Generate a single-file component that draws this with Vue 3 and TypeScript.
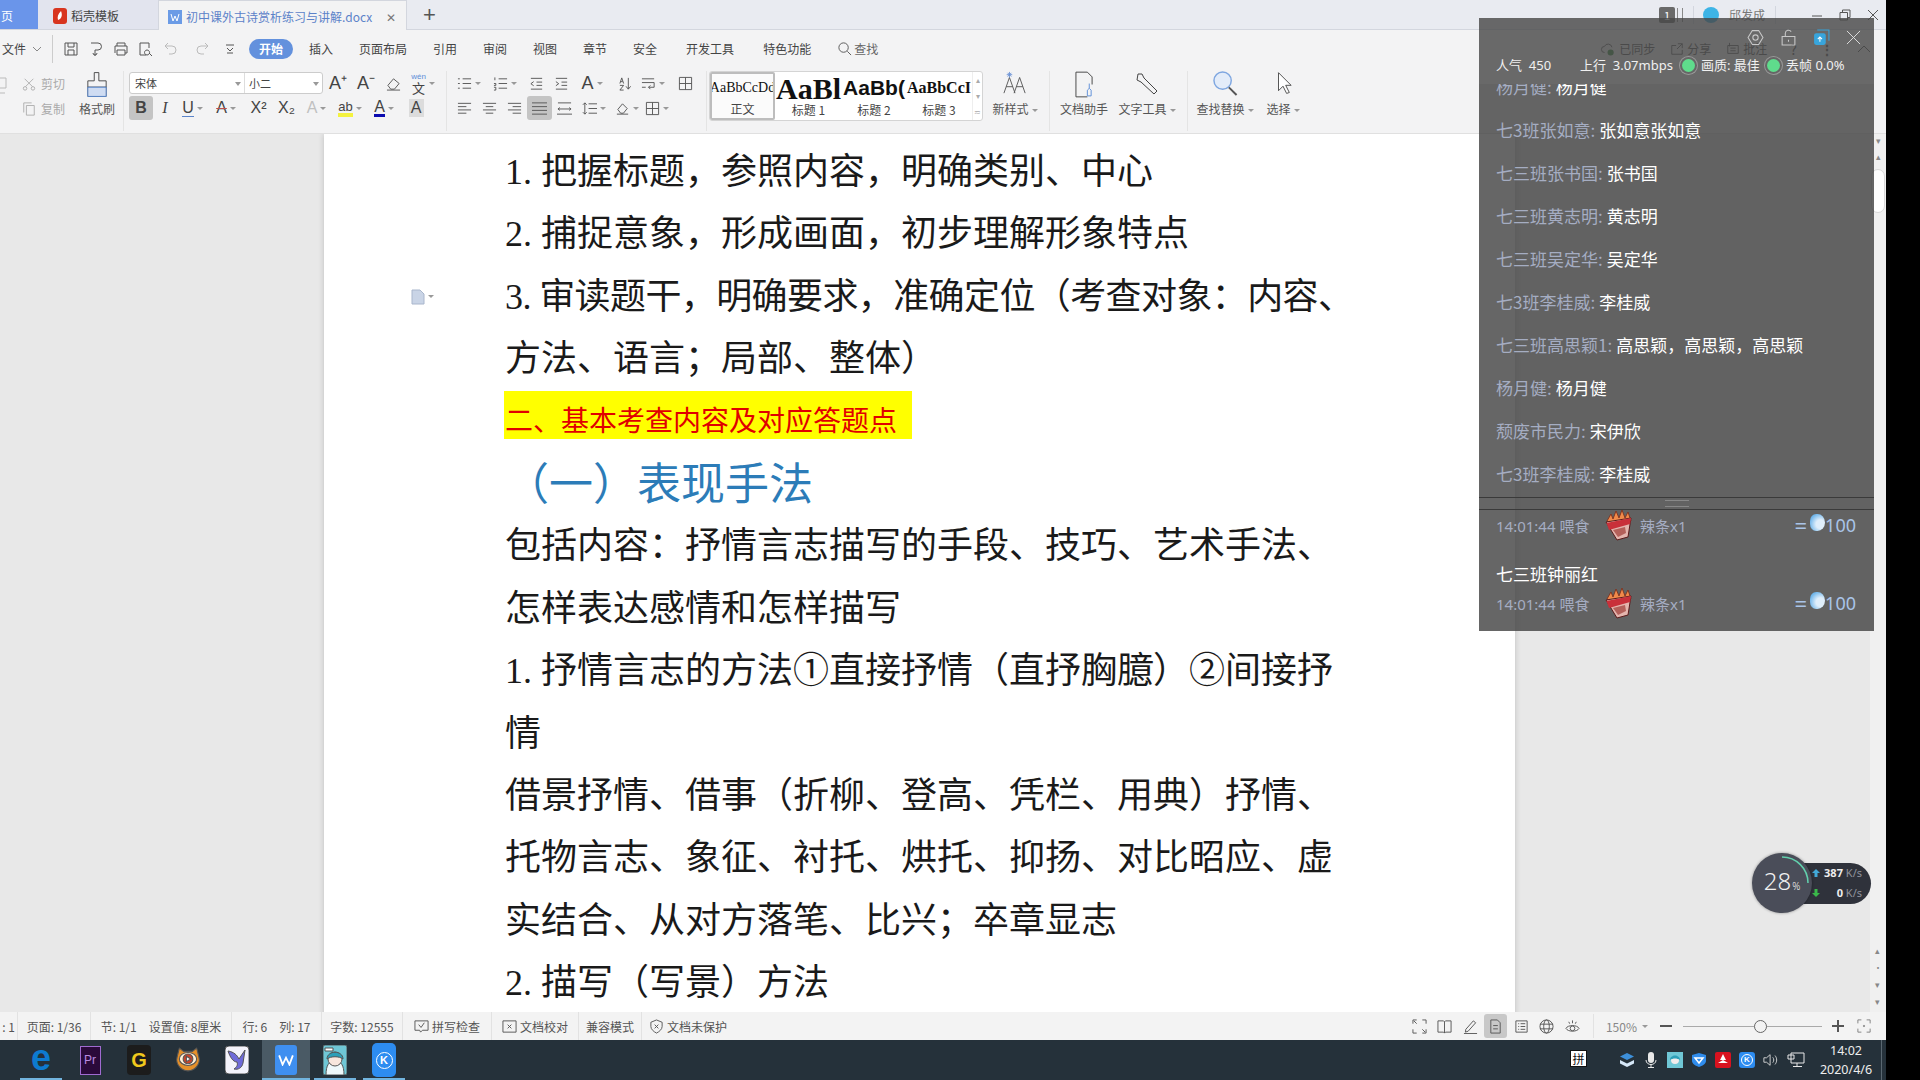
<script setup lang="ts">
interface Tool {
  w: number
  t?: string
  cls?: string
  d?: string
  drop?: boolean
}

const P = {
  bullets: 'M6 3h9M6 8h9M6 13h9M1 3h2M1 8h2M1 13h2',
  numbers: 'M6 3h9M6 8h9M6 13h9M2 1.5v3M1 8h2v2H1M1 12h2v3H1',
  indentL: 'M2 2.5h12M8 6.5h6M8 10h6M2 14h12M5 6L2 8.2l3 2.2',
  indentR: 'M2 2.5h12M8 6.5h6M8 10h6M2 14h12M2 6l3 2.2-3 2.2',
  eraser: 'M2 10l6-7 6 5-5 6H5zM1 15h14',
  alignL: 'M1 2.5h14M1 6h9M1 9.5h14M1 13h9',
  alignC: 'M1 2.5h14M4 6h8M1 9.5h14M4 13h8',
  alignR: 'M1 2.5h14M6 6h9M1 9.5h14M6 13h9',
  justify: 'M0 2h16M0 6h16M0 10h16M0 14h16',
  dist: 'M0 14h16M1 2h14M3 7l-2 1.5L3 10M13 7l2 1.5-2 1.5M2 8.5h12',
  spacing: 'M7 3h9M7 8h9M7 13h9M3 2v12M1 4l2-2 2 2M1 12l2 2 2-2',
  sort: 'M11 2v12M8.5 11l2.5 3 2.5-3M2 8l2-6 2 6M3 6h2M2 10h4l-4 5h4',
  wrap: 'M1 3h13M1 7h13M1 12h4M14 7v5H8M10 10l-2 2 2 2',
  grid: 'M1.5 1.5h13v13h-13zM8 1.5v13M1.5 8h13',
  shade: 'M3 9l5-6 5 5-4 5H6zM2 14h12',
}

const fontRow1: Tool[] = [
  { w: 28, t: 'A⁺', cls: 'glyph big' },
  { w: 28, t: 'A⁻', cls: 'glyph big' },
  { w: 27, d: P.eraser },
]
const fontRow2: Tool[] = [
  { w: 24, t: 'B', cls: 'glyph bold on' },
  { w: 24, t: 'I', cls: 'glyph ital' },
  { w: 31, t: 'U', cls: 'glyph under', drop: true },
  { w: 36, t: 'A', cls: 'glyph strike', drop: true },
  { w: 29, t: 'X²', cls: 'glyph' },
  { w: 27, t: 'X₂', cls: 'glyph' },
  { w: 33, t: 'A', cls: 'glyph ghost', drop: true },
  { w: 34, t: 'ab', cls: 'glyph hl', drop: true },
  { w: 34, t: 'A', cls: 'glyph blue', drop: true },
  { w: 30, t: 'A', cls: 'glyph shaded' },
]
const paraRow1: Tool[] = [
  { w: 34, d: P.bullets, drop: true },
  { w: 38, d: P.numbers, drop: true },
  { w: 25, d: P.indentL },
  { w: 25, d: P.indentR },
  { w: 36, t: 'A', cls: 'glyph big', drop: true },
  { w: 30, d: P.sort },
  { w: 26, d: P.wrap, drop: true },
  { w: 38, d: P.grid },
]
const paraRow2: Tool[] = [
  { w: 25, d: P.alignL },
  { w: 25, d: P.alignC },
  { w: 25, d: P.alignR },
  { w: 25, d: P.justify, cls: 'on' },
  { w: 25, d: P.dist },
  { w: 34, d: P.spacing, drop: true },
  { w: 31, d: P.shade, drop: true },
  { w: 30, d: P.grid, drop: true },
]

const menus = ['插入', '页面布局', '引用', '审阅', '视图', '章节', '安全', '开发工具', '特色功能']

const styles = [
  { sample: 'AaBbCcDd', label: '正文', cls: 's0' },
  { sample: 'AaBl', label: '标题 1', cls: 's1' },
  { sample: 'AaBb(', label: '标题 2', cls: 's2' },
  { sample: 'AaBbCcI', label: '标题 3', cls: 's3' },
]

const docLines = [
  { text: '1. 把握标题，参照内容，明确类别、中心' },
  { text: '2. 捕捉意象，形成画面，初步理解形象特点' },
  { text: '3. 审读题干，明确要求，准确定位（考查对象：内容、', note: true, cls: 'tight' },
  { text: '方法、语言；局部、整体）' },
  { text: '二、基本考查内容及对应答题点', cls: 'mark' },
  { text: '（一）表现手法', cls: 'heading' },
  { text: '包括内容：抒情言志描写的手段、技巧、艺术手法、' },
  { text: '怎样表达感情和怎样描写' },
  { text: '1. 抒情言志的方法①直接抒情（直抒胸臆）②间接抒' },
  { text: '情' },
  { text: '借景抒情、借事（折柳、登高、凭栏、用典）抒情、' },
  { text: '托物言志、象征、衬托、烘托、抑扬、对比昭应、虚' },
  { text: '实结合、从对方落笔、比兴；卒章显志' },
  { text: '2. 描写（写景）方法' },
]

const chats = [
  { name: '杨月健', msg: '杨月健' },
  { name: '七3班张如意', msg: '张如意张如意' },
  { name: '七三班张书国', msg: '张书国' },
  { name: '七三班黄志明', msg: '黄志明' },
  { name: '七三班吴定华', msg: '吴定华' },
  { name: '七3班李桂威', msg: '李桂威' },
  { name: '七三班高思颖1', msg: '高思颖，高思颖，高思颖' },
  { name: '杨月健', msg: '杨月健' },
  { name: '颓废市民力', msg: '宋伊欣' },
  { name: '七3班李桂威', msg: '李桂威' },
]

const gifts = [{ user: '' }, { user: '七三班钟丽红' }]

const statusLeft = [
  { items: [': 1'], w: 18 },
  { items: ['页面: 1/36'], w: 73 },
  { items: ['节: 1/1', '设置值: 8厘米'], w: 141 },
  { items: ['行: 6', '列: 17'], w: 90 },
  { items: ['字数: 12555'], w: 81 },
]
</script>

<template>
  <div class="screen" lang="zh-CN">
    <div class="window">
      <!-- tab strip -->
      <header class="tabs">
        <div class="tab home">页</div>
        <div class="tab tpl">
          <svg class="logo-d" viewBox="0 0 14 16"><rect width="14" height="16" rx="3" fill="#d8351f" /><path d="M8 3C5 6 4 9 5 12c3-1 5-4 3-9z" fill="#fff" /></svg>
          <span>稻壳模板</span>
        </div>
        <div class="tab doc-tab">
          <svg class="logo-w" viewBox="0 0 14 14"><rect width="14" height="14" fill="#6b9be6" /><path d="M3 4l2 7 2-5 2 5 2-7" fill="none" stroke="#fff" /></svg>
          <span class="doc-name">初中课外古诗赏析练习与讲解.docx</span>
          <span class="tab-x">✕</span>
        </div>
        <span class="tab-plus">+</span>
        <div class="tabs-right">
          <span class="badge">1</span>
          <span class="bars"></span>
          <i class="vsep"></i>
          <span class="avatar"></span>
          <span class="uname">邱发成</span>
          <i class="vsep"></i>
          <span class="win-btns">
            <svg viewBox="0 0 12 12"><path d="M1 7h10" /></svg>
            <svg viewBox="0 0 12 12"><path d="M1 3.5h7.5V11H1zM3.5 3.5V1H11v7.5H8.5" /></svg>
            <svg viewBox="0 0 12 12"><path d="M1 1l10 10M11 1L1 11" /></svg>
          </span>
        </div>
      </header>

      <!-- menu row -->
      <nav class="menu">
        <span class="m-file">文件</span>
        <svg class="m-chev" viewBox="0 0 10 6"><path d="M1 1l4 4 4-4" /></svg>
        <i class="m-sep"></i>
        <div class="quick">
          <svg viewBox="0 0 16 16"><path d="M2 2h12v12H2zM5 2v4h6V2M5 14V9h6v5" /></svg>
          <svg viewBox="0 0 16 16"><path d="M3 2h7a3 3 0 0 1 0 7H7v6M5 12a2 2 0 1 0 4 0" /></svg>
          <svg viewBox="0 0 16 16"><path d="M4 5V2h8v3M2 12V5h12v7h-2M4 9h8v5H4z" /></svg>
          <svg viewBox="0 0 16 16"><path d="M8 14H2V2h9v5M9 9a2.5 2.5 0 1 0 .1 0zM11 12l3 3" /></svg>
          <svg class="dim" viewBox="0 0 16 16"><path d="M5 2L2 5l3 3M2 5h7a4 4 0 0 1 0 8H6" /></svg>
          <svg class="dim gap" viewBox="0 0 16 16"><path d="M11 2l3 3-3 3M14 5H7a4 4 0 0 0 0 8h3" /></svg>
          <svg class="small" viewBox="0 0 10 10"><path d="M1 1h8M2 4l3 3 3-3M2 9h6" /></svg>
        </div>
        <span class="start">开始</span>
        <div class="m-items">
          <span v-for="m in menus" :key="m" :class="{ wide: m === '开发工具' || m === '特色功能' }">{{ m }}</span>
          <span class="m-find">
            <svg viewBox="0 0 16 16"><circle cx="7" cy="7" r="5" /><path d="M11 11l4 4" /></svg>查找
          </span>
        </div>
        <div class="m-right">
          <svg class="sync" viewBox="0 0 18 16"><path d="M5 12a3.5 3.5 0 0 1 0-7 4.5 4.5 0 0 1 8.5 1" /><circle cx="12" cy="12" r="3.5" fill="#3d8b40" stroke="none" /></svg>
          <span>已同步</span>
          <svg viewBox="0 0 16 16"><path d="M14 9v5H2V4h5M9 2h5v5M14 2L8 8" /></svg>
          <span>分享</span>
          <svg viewBox="0 0 16 16"><path d="M2 4h12v9H2zM5 7h6M5 10h6M4 1v4" /></svg>
          <span>批注</span>
          <span class="q">?</span>
          <span class="q dots">⋮</span>
          <svg class="fold" viewBox="0 0 14 8"><path d="M1 7l6-6 6 6" /></svg>
        </div>
      </nav>

      <!-- ribbon -->
      <section class="ribbon">
        <div class="rb-clip">
          <div class="rb-stub">
            <svg viewBox="0 0 10 24"><path d="M-4 3h10v10H-4zM-4 18h9" /></svg>
          </div>
          <div class="rb-cut">
            <div class="cut-row"><svg viewBox="0 0 16 16"><path d="M3 2l9 9M13 2L4 11" /><circle cx="3.5" cy="13" r="2" /><circle cx="12.5" cy="13" r="2" /></svg>剪切</div>
            <div class="cut-row"><svg viewBox="0 0 16 16"><path d="M5 4h9v11H5zM2 12V1h9" /></svg>复制</div>
          </div>
          <div class="big-tool brush">
            <svg viewBox="0 0 24 28"><path d="M9 1h5v9h8v7H2v-7h7zM2 17h20v10H2z" fill="none" stroke="#444" /><path d="M2.5 17h19v9.500h-19z" fill="#cfdcf2" stroke="none" /><path d="M2 17h20v10H2z" fill="none" stroke="#5d8ed8" /></svg>
            <span>格式刷</span>
          </div>
        </div>
        <i class="rb-sep"></i>

        <div class="rb-font">
          <div class="rb-row">
            <div class="combo">
              <span class="c-name">宋体<b></b></span>
              <span class="c-size">小二<b></b></span>
            </div>
            <div v-for="(t, i) in fontRow1" :key="i" class="tool" :class="t.cls" :style="{ width: t.w + 'px' }">
              <svg v-if="t.d" viewBox="0 0 16 16"><path :d="t.d" /></svg>
              <span v-else class="g">{{ t.t }}</span>
            </div>
            <div class="tool wen">
              <span class="wen-stack"><small>wén</small><span>文</span></span>
              <b class="drop"></b>
            </div>
          </div>
          <div class="rb-row">
            <div v-for="(t, i) in fontRow2" :key="i" class="tool" :class="t.cls" :style="{ width: t.w + 'px' }">
              <span class="g">{{ t.t }}</span>
              <b v-if="t.drop" class="drop"></b>
            </div>
          </div>
        </div>
        <i class="rb-sep"></i>

        <div class="rb-para">
          <div class="rb-row">
            <div v-for="(t, i) in paraRow1" :key="i" class="tool" :class="t.cls" :style="{ width: t.w + 'px' }">
              <svg v-if="t.d" viewBox="0 0 16 16"><path :d="t.d" /></svg>
              <span v-else class="g">{{ t.t }}</span>
              <b v-if="t.drop" class="drop"></b>
            </div>
          </div>
          <div class="rb-row">
            <div v-for="(t, i) in paraRow2" :key="i" class="tool" :class="t.cls" :style="{ width: t.w + 'px' }">
              <svg viewBox="0 0 16 16"><path :d="t.d" /></svg>
              <b v-if="t.drop" class="drop"></b>
            </div>
          </div>
        </div>
        <i class="rb-sep"></i>

        <div class="gallery">
          <div v-for="s in styles" :key="s.label" class="g-cell" :class="s.cls">
            <span class="g-sample">{{ s.sample }}</span>
            <span class="g-label">{{ s.label }}</span>
          </div>
          <div class="g-scroll"><b>▴</b><b>▾</b><b>≂</b></div>
        </div>
        <div class="big-tool newstyle">
          <svg viewBox="0 0 26 24"><path d="M1 23L7 6l6 17M3.500 16h7M12 23l6-17 6 17M14.500 16h7" fill="none" stroke="#555" /><path d="M7 0v6M4 3h6M5 1l4 4M9 1L5 5" stroke="#6b93d6" fill="none" /></svg>
          <span>新样式<b class="drop"></b></span>
        </div>
        <i class="rb-sep"></i>

        <div class="big-tool helper">
          <svg viewBox="0 0 20 28"><path d="M13 27H1V1h12l5 5v8" fill="none" stroke="#444" /><path d="M15 13v5l-2 2v6h4v-6l-2-2" fill="none" stroke="#5d8ed8" /></svg>
          <span>文档助手</span>
        </div>
        <div class="big-tool wrench">
          <svg viewBox="0 0 24 26"><path d="M3 3l4 0 2 4 13 13-3 3L6 11 2 9z" fill="none" stroke="#444" /></svg>
          <span>文字工具<b class="drop"></b></span>
        </div>
        <i class="rb-sep"></i>

        <div class="big-tool finder">
          <svg viewBox="0 0 26 26"><circle cx="10" cy="10" r="9" fill="#e3ecf9" stroke="#7ea6e0" stroke-width="1.5" /><path d="M16.500 17l8 8" stroke="#555" stroke-width="2" /></svg>
          <span>查找替换<b class="drop"></b></span>
        </div>
        <div class="big-tool picker">
          <svg viewBox="0 0 20 26"><path d="M5 1v20l5-5 4 8 3-1-4-8h6z" fill="#fff" stroke="#444" /></svg>
          <span>选择<b class="drop"></b></span>
        </div>
      </section>

      <!-- document -->
      <main class="desk">
        <div class="pane">
          <article class="page">
            <div v-for="(l, i) in docLines" :key="i" class="line" :class="l.cls">
              <span v-if="l.note" class="note">
                <svg viewBox="0 0 14 16"><path d="M1 1h8l4 4v10H1z" fill="#c9d4e6" stroke="#a9b6cc" /></svg>
                <b class="drop"></b>
              </span>
              <span class="txt">{{ l.text }}</span>
            </div>
          </article>
        </div>
        <div class="vscroll">
          <span class="sb-top">
            <b>▾</b>
            <b>▴</b>
          </span>
          <span class="sb-thumb"></span>
          <span class="sb-bottom"><b>▴</b><b>•</b><b>▾</b><b>▾</b></span>
        </div>
      </main>

      <!-- status bar -->
      <footer class="status">
        <div v-for="(g, i) in statusLeft" :key="i" class="st-group" :style="{ width: g.w + 'px' }">
          <span v-for="s in g.items" :key="s">{{ s }}</span>
        </div>
        <div class="st-group icon-group st-check">
          <svg viewBox="0 0 16 16"><path d="M1 2h14v10H9l-2 2-1-2H1zM5 6l2.500 3L11 4" /></svg>
          <span>拼写检查</span>
        </div>
        <div class="st-group icon-group st-proof">
          <svg viewBox="0 0 16 16"><path d="M1 2h14v12H1zM6 6l4 4M10 6l-4 4" /></svg>
          <span>文档校对</span>
        </div>
        <div class="st-group st-compat"><span>兼容模式</span></div>
        <div class="st-group icon-group st-shield">
          <svg viewBox="0 0 16 16"><path d="M8 1l6 2.500V8c0 3-3 5.500-6 7-3-1.500-6-4-6-7V3.500zM6 6l4 4M10 6l-4 4" /></svg>
          <span>文档未保护</span>
        </div>
        <div class="st-right">
          <div class="views">
            <svg viewBox="0 0 16 16"><path d="M1 5V1h4M11 1h4v4M15 11v4h-4M5 15H1v-4M2 2l3 3M14 14l-3-3" /></svg>
            <svg viewBox="0 0 16 16"><path d="M1 2h6l1 1 1-1h6v12H9l-1 1-1-1H1zM8 3v12" /></svg>
            <svg viewBox="0 0 16 16"><path d="M3 11l8-9 2.500 2-8 9-3 1zM1 15.500h14" /></svg>
            <span class="view-on"><svg viewBox="0 0 16 16"><path d="M3 1h7l3 3v11H3zM5.500 7h5M5.500 10.500h5" /></svg></span>
            <svg viewBox="0 0 16 16"><path d="M2 2h12v12H2zM4.500 5h1M7 5h5M4.500 8h1M7 8h5M4.500 11h1M7 11h5" /></svg>
            <svg viewBox="0 0 16 16"><circle cx="8" cy="8" r="7" /><ellipse cx="8" cy="8" rx="3" ry="7" /><path d="M1 5.500h14M1 10.500h14" /></svg>
            <svg viewBox="0 0 16 16"><path d="M1 10c2-4 12-4 14 0-2 4-12 4-14 0zM4 3l1 2M8 1.500v3M12 3l-1 2" /><circle cx="8" cy="10" r="2.500" /></svg>
          </div>
          <i class="st-sep"></i>
          <span class="zoom-val">150%</span><b class="drop z-drop"></b>
          <span class="z-minus"></span>
          <div class="slider"><i></i></div>
          <span class="z-plus"></span>
          <svg class="z-fit" viewBox="0 0 16 16"><path d="M1 5V1h4M11 1h4v4M15 11v4h-4M5 15H1v-4" /><circle cx="8" cy="8" r=".8" /></svg>
        </div>
      </footer>

      <!-- taskbar -->
      <div class="taskbar">
        <div class="apps">
          <div class="app running"><span class="ico-e">e</span></div>
          <div class="app"><span class="ico-pr">Pr</span></div>
          <div class="app"><span class="ico-g">G</span></div>
          <div class="app">
            <svg viewBox="0 0 24 24" width="26" height="26" stroke="none"><path d="M4 1l4 3h8l4-3 2 8c2 7-4 13-10 13S0 16 2 9z" fill="#e5902a" /><ellipse cx="12" cy="11" rx="8" ry="6" fill="#fff1d8" /><circle cx="12" cy="11" r="4.500" fill="#c8452a" /><path d="M10.500 8.500l4 2.500-4 2.500z" fill="#fff" /></svg>
          </div>
          <div class="app">
            <svg viewBox="0 0 24 28" width="24" height="28" stroke="none"><rect width="24" height="28" rx="4" fill="#f3f3fb" /><path d="M3 5c6 1 9 4 11 8l6-9-2 13c-1 5-5 7-9 6 3-2 4-4 3-7-4 0-7-5-9-11z" fill="#6f6bd9" /></svg>
          </div>
          <div class="app active running">
            <span class="ico-w"><svg viewBox="0 0 14 10" width="16" height="12"><path d="M1 1l3 8 3-6 3 6 3-8" fill="none" stroke="#fff" stroke-width="1.600" /></svg></span>
          </div>
          <div class="app running">
            <svg viewBox="0 0 24 30" width="24" height="30" stroke="none"><rect width="24" height="30" rx="2" fill="#6fc7d6" /><path d="M3 30c0-10 3-14 9-14s9 4 9 14z" fill="#eef8fb" /><circle cx="12" cy="14" r="7" fill="#f8e6dd" /><path d="M4 14c0-9 16-9 16 0-4-3-12-3-16 0z" fill="#2d9fb8" /><path d="M2 3h8v3H2z" fill="#fff" /></svg>
          </div>
          <div class="app running"><span class="ico-k"><i>K</i></span></div>
        </div>
        <div class="tray">
          <span class="ime">拼</span>
          <svg viewBox="0 0 16 16" class="t-ico"><path d="M8 1l7 3.500L8 8 1 4.500z" fill="#3d8fd9" /><path d="M1 8l7 3.500L15 8v3.500L8 15l-7-3.500z" fill="#d6e8f8" /></svg>
          <svg viewBox="0 0 16 16" class="t-ico"><rect x="5" y="0" width="6" height="11" rx="3" fill="#e8e8e8" /><path d="M3 8c0 6 10 6 10 0M8 12v3M5 15.500h6" fill="none" stroke="#e8e8e8" /></svg>
          <svg viewBox="0 0 16 16" class="t-ico"><rect width="16" height="16" fill="#6fc7d6" /><circle cx="8" cy="8" r="4" fill="#f2ecec" /><path d="M3 8c0-6 10-6 10 0-3-2-7-2-10 0z" fill="#2d9fb8" /></svg>
          <svg viewBox="0 0 16 16" class="t-ico"><path d="M8 1l7 2v6c0 3-4 5-7 6-3-1-7-3-7-6V3z" fill="#2f8cec" /><path d="M4 6h8L8 11z" fill="none" stroke="#fff" stroke-width="1.500" /></svg>
          <svg viewBox="0 0 16 16" class="t-ico"><rect width="16" height="16" rx="2" fill="#d8121f" /><path d="M8 2l3 6H5zM3 11h10L8 8z" fill="#fff" /></svg>
          <span class="t-k"><i>K</i></span>
          <svg viewBox="0 0 18 16" class="t-ico vol"><path d="M1 5.500h3L8 2v12l-4-3.500H1zM11 5c1.500 2 1.500 4 0 6M13.500 3c2.500 3 2.500 7 0 10" fill="none" stroke="#ddd" /></svg>
          <svg viewBox="0 0 18 16" class="t-ico net"><path d="M4 1h13v10H4zM1 3h6v4H1zM10 11v3M6 14.500h9" fill="none" stroke="#e8e8e8" /></svg>
          <div class="clock"><span>14:02</span><span>2020/4/6</span></div>
          <i class="show-desktop"></i>
        </div>
      </div>

      <!-- floating live panel -->
      <aside class="live">
        <div class="live-head">
          <div class="live-tools">
            <svg viewBox="0 0 16 16"><path d="M5 1.500h6L15 8l-4 6.500H5L1 8z" /><circle cx="8" cy="8" r="2.500" /></svg>
            <svg viewBox="0 0 16 16"><path d="M2 7h12v8H2zM5 7V4a3 3 0 0 1 5.500-1.500M8 10v2" /></svg>
            <svg class="up" viewBox="0 0 16 16"><path d="M4 1h11v10" /><rect x="1" y="4" width="11" height="11" rx="2" fill="#38a5dc" stroke="none" /><path d="M6.500 12V7.500M4.500 9.500l2-2 2 2" stroke="#fff" /></svg>
            <svg class="close" viewBox="0 0 16 16"><path d="M1 1l14 14M15 1L1 15" /></svg>
          </div>
          <div class="live-stats">
            <span class="s-pop">人气&nbsp;&nbsp;450</span>
            <span class="s-up">上行&nbsp;&nbsp;3.07mbps</span>
            <i class="dot"></i>
            <span class="s-q">画质: 最佳</span>
            <i class="dot"></i>
            <span>丢帧 0.0%</span>
          </div>
        </div>
        <div class="chat">
          <div v-for="(c, i) in chats" :key="i" class="chat-row">
            <span class="c-user">{{ c.name }}:</span>
            <span class="c-msg">{{ c.msg }}</span>
          </div>
        </div>
        <div class="handle"><i></i></div>
        <div class="gifts">
          <div v-for="(g, i) in gifts" :key="i" class="gift">
            <div v-if="g.user" class="g-user">{{ g.user }}</div>
            <div class="g-line">
              <span class="g-time">14:01:44 喂食</span>
              <svg class="fries" viewBox="0 0 30 32">
                <path d="M3 12l4-7 2 5 3-8 3 7 3-8 3 8 3-6 3 9-12 8z" fill="#f08a4a" stroke="#7a2a18" stroke-width=".8" />
                <path d="M2 13l25-4 -3 19-11 3z" fill="#e4b5ae" stroke="#5a1a1a" />
                <path d="M2.500 14l24.500-5-1 6-21 6z" fill="#c9303a" />
                <path d="M9 21l12-3 1 6-8 4z" fill="#b4605a" />
              </svg>
              <span class="g-item">辣条x1</span>
              <span class="g-price">
                <span class="eq">=</span>
                <i class="gem"></i>
                <span>100</span>
              </span>
            </div>
          </div>
        </div>
      </aside>

      <!-- network gauge -->
      <div class="gauge">
        <div class="g-pill">
          <div class="g-rate">
            <svg class="arr" viewBox="0 0 8 8"><path d="M4 0l4 4H5.500v4h-3V4H0z" fill="#42a9d8" stroke="none" /></svg>
            <span><em>387</em> K/s</span>
          </div>
          <div class="g-rate">
            <svg class="arr" viewBox="0 0 8 8"><path d="M4 8L0 4h2.500V0h3v4H8z" fill="#3ab84a" stroke="none" /></svg>
            <span><em>0</em> K/s</span>
          </div>
        </div>
        <div class="g-ring">
          <svg viewBox="0 0 60 60"><path d="M30 4a26 26 0 0 1 26 26" fill="none" stroke="#62d0ad" stroke-width="1.500" /></svg>
          <span class="g-num">28<small>%</small></span>
        </div>
      </div>
    </div>
    <div class="black"></div>
  </div>
</template>

<style scoped>
.screen {
  width: 1920px;
  height: 1080px;
  display: flex;
  overflow: hidden;
  background: #000;
  font-family: "Noto Sans CJK SC", "Liberation Sans", sans-serif;
  color: #444;
  font-size: 12px;
}
.window {
  position: relative;
  width: 1886px;
  height: 1080px;
  display: flex;
  flex-direction: column;
  background: #f3f3f4;
}
.black {
  flex: 1;
  background: #000;
}
svg {
  fill: none;
  stroke: #555;
  stroke-width: 1;
  flex-shrink: 0;
}

/* tabs */
.tabs {
  height: 29px;
  flex-shrink: 0;
  display: flex;
  background: #e9ebf1;
  border-bottom: 1px solid #d3d6de;
  box-sizing: content-box;
}
.tab {
  display: flex;
  align-items: center;
  height: 29px;
  padding-top: 2px;
}
.home {
  width: 38px;
  background: #6a95ea;
  color: #fff;
  padding-left: 1px;
  box-sizing: border-box;
}
.tpl {
  width: 120px;
  background: #e2e4ee;
  padding-left: 15px;
  box-sizing: border-box;
  gap: 4px;
}
.logo-d {
  width: 14px;
  height: 18px;
  stroke: none;
}
.doc-tab {
  width: 249px;
  height: 30px;
  box-sizing: border-box;
  background: #f3f3f4;
  border: 1px solid #d3d6de;
  border-bottom: none;
  padding-left: 9px;
  gap: 4px;
}
.logo-w {
  width: 14px;
  height: 14px;
  stroke: none;
}
.doc-name {
  color: #5c82c9;
  white-space: nowrap;
}
.tab-x {
  margin-left: 10px;
  color: #777;
  font-size: 12px;
}
.tab-plus {
  margin-left: 16px;
  font-size: 22px;
  line-height: 30px;
  color: #555;
  font-family: "Liberation Sans", sans-serif;
}
.tabs-right {
  margin-left: auto;
  display: flex;
  align-items: center;
  height: 29px;
  padding-right: 7px;
  color: #777;
}
.badge {
  width: 16px;
  height: 16px;
  background: #6a6a6a;
  color: #fff;
  text-align: center;
  line-height: 16px;
  border-radius: 2px;
  font-size: 11px;
}
.bars {
  width: 4px;
  height: 14px;
  margin-left: 2px;
  border-left: 1px solid #888;
  border-right: 1px solid #888;
}
.vsep {
  width: 1px;
  height: 18px;
  background: #d3d6de;
  margin: 0 9px 0 10px;
}
.avatar {
  width: 16px;
  height: 16px;
  border-radius: 50%;
  background: #3db4e6;
}
.uname {
  margin-left: 10px;
  width: 36px;
  white-space: nowrap;
}
.win-btns {
  display: flex;
  gap: 16px;
  margin-left: 26px;
}
.win-btns svg {
  width: 12px;
  height: 12px;
}

/* menu */
.menu {
  height: 35px;
  flex-shrink: 0;
  display: flex;
  align-items: center;
  padding-top: 2px;
  box-sizing: border-box;
  font-size: 12px;
  background: #f3f3f4;
}
.m-file {
  margin-left: 2px;
  width: 30px;
}
.m-chev {
  width: 10px;
  height: 6px;
  stroke: #888;
}
.m-sep {
  width: 1px;
  height: 28px;
  background: #ccc;
  margin-left: 10px;
}
.quick {
  display: flex;
  align-items: center;
  margin-left: 10px;
  gap: 9px;
  width: 186px;
}
.quick svg {
  width: 16px;
  height: 16px;
}
.quick .dim {
  stroke: #bbb;
}
.quick .gap {
  margin-left: 6px;
}
.quick .small {
  width: 10px;
  height: 10px;
  margin-left: 6px;
}
.start {
  width: 44px;
  height: 20px;
  line-height: 20px;
  border-radius: 10px;
  background: #6391dd;
  color: #fff;
  text-align: center;
  font-weight: 700;
}
.m-items {
  display: flex;
  align-items: center;
  gap: 26px;
  margin-left: 16px;
  white-space: nowrap;
}
.m-items .wide {
  margin-left: 3px;
}
.m-find {
  display: flex;
  align-items: center;
  gap: 2px;
  margin-left: 0;
  color: #666;
}
.m-find svg {
  width: 15px;
  height: 15px;
}
.m-right {
  margin-left: auto;
  display: flex;
  align-items: center;
  gap: 3px;
  color: #555;
  padding-right: 15px;
  font-size: 12px;
}
.m-right svg {
  width: 14px;
  height: 14px;
}
.m-right span:not(.q) {
  margin-right: 12px;
}
.m-right .sync {
  width: 16px;
}
.q {
  font-size: 14px;
  margin-right: 20px;
  margin-left: 8px;
}
.dots {
  font-weight: 700;
  margin-left: 0;
}
.fold {
  height: 8px !important;
}

/* ribbon */
.ribbon {
  height: 69px;
  flex-shrink: 0;
  display: flex;
  padding-top: 6px;
  box-sizing: border-box;
  background: #f3f3f4;
  border-bottom: 1px solid #e0e0e0;
}
.rb-sep {
  width: 1px;
  height: 60px;
  background: #e4e4e4;
  flex-shrink: 0;
}
.rb-clip {
  width: 123px;
  display: flex;
  flex-shrink: 0;
}
.rb-stub {
  width: 22px;
}
.rb-stub svg {
  width: 10px;
  height: 24px;
  margin-top: 4px;
  stroke: #bbb;
}
.rb-cut {
  width: 54px;
  color: #aaa;
  display: flex;
  flex-direction: column;
  gap: 6px;
  padding-top: 3px;
}
.cut-row {
  display: flex;
  align-items: center;
  gap: 5px;
  height: 19px;
  white-space: nowrap;
}
.cut-row svg {
  width: 14px;
  height: 14px;
  stroke: #aaa;
}
.big-tool {
  display: flex;
  flex-direction: column;
  align-items: center;
  flex-shrink: 0;
  white-space: nowrap;
  color: #555;
  height: 46px;
  justify-content: space-between;
}
.brush {
  width: 40px;
  margin-left: 1px;
}
.brush svg {
  width: 22px;
  height: 27px;
}
.rb-font {
  margin-left: 5px;
  width: 317px;
  flex-shrink: 0;
}
.rb-para {
  margin-left: 5px;
  width: 254px;
  flex-shrink: 0;
}
.rb-row {
  display: flex;
  align-items: center;
  height: 24px;
  margin-bottom: 1px;
}
.combo {
  width: 194px;
  height: 22px;
  margin-right: 1px;
  display: flex;
  flex-shrink: 0;
  background: #fff;
  border: 1px solid #ccc;
  border-radius: 3px;
  box-sizing: border-box;
  font-size: 11px;
}
.c-name,
.c-size {
  display: flex;
  align-items: center;
  position: relative;
  padding-left: 5px;
  box-sizing: border-box;
}
.c-name {
  width: 115px;
  border-right: 1px solid #ddd;
}
.c-size {
  width: 77px;
  padding-left: 4px;
}
.c-name b,
.c-size b {
  position: absolute;
  right: 3px;
  top: 9px;
  border: 3px solid transparent;
  border-top: 4px solid #999;
}
.tool {
  height: 24px;
  display: flex;
  align-items: center;
  justify-content: center;
  flex-shrink: 0;
  position: relative;
}
.tool svg {
  width: 15px;
  height: 15px;
}
.tool.on {
  background: #c4c4c4;
  border-radius: 3px;
}
.drop {
  display: inline-block;
  border: 3px solid transparent;
  border-top: 3px solid #999;
  border-bottom: none;
  margin-left: 3px;
  vertical-align: middle;
}
.glyph .g {
  font-family: "Liberation Sans", sans-serif;
  font-size: 16px;
  line-height: 18px;
  color: #444;
}
.glyph.big .g {
  font-size: 18px;
}
.bold .g {
  font-weight: 700;
}
.ital .g {
  font-style: italic;
  font-family: "Liberation Serif", serif;
}
.under .g {
  border-bottom: 1px solid #5b84c9;
  line-height: 16px;
}
.strike .g {
  text-decoration: line-through;
  text-decoration-color: #c0504d;
}
.ghost .g {
  color: #c0c0c0;
}
.hl .g {
  font-size: 13px;
  border-bottom: 4px solid #f4f23f;
  line-height: 13px;
}
.blue .g {
  border-bottom: 3px solid #0b0bb0;
  line-height: 15px;
}
.shaded .g {
  background: #dcdcdc;
  width: 15px;
  text-align: center;
}
.wen {
  width: 32px;
}
.wen-stack {
  display: flex;
  flex-direction: column;
  align-items: center;
  line-height: 10px;
  font-size: 13px;
}
.wen-stack small {
  font: 8px/8px "Liberation Sans", sans-serif;
  color: #5d8ed8;
}
.wen-stack span {
  line-height: 13px;
}

.gallery {
  margin-left: 2px;
  width: 274px;
  height: 50px;
  display: flex;
  flex-shrink: 0;
  background: #fff;
  border: 1px solid #d4d4d4;
  border-radius: 3px;
  box-sizing: border-box;
  position: relative;
}
.g-cell {
  display: flex;
  flex-direction: column;
  align-items: center;
  overflow: hidden;
  height: 48px;
  box-sizing: border-box;
  flex-shrink: 0;
}
.g-sample {
  height: 31px;
  line-height: 31px;
  color: #111;
  white-space: nowrap;
}
.g-label {
  font-size: 12px;
  line-height: 14px;
  color: #444;
}
.s0 {
  width: 65px;
  border: 2px solid #bdbdbd;
  border-radius: 2px;
  background: #fbfbfb;
}
.s0 .g-sample {
  font: 14px/28px "Liberation Serif", serif;
  height: 28px;
}
.s1 {
  width: 67px;
}
.s1 .g-sample {
  font: 700 30px/33px "Liberation Serif", serif;
}
.s2 {
  width: 64px;
}
.s2 .g-sample {
  font: 700 21px/31px "Liberation Sans", sans-serif;
}
.s3 {
  width: 66px;
}
.s3 .g-sample {
  font: 700 16px/31px "Liberation Serif", serif;
}
.g-scroll {
  position: absolute;
  right: 0;
  top: 0;
  width: 9px;
  height: 48px;
  display: flex;
  flex-direction: column;
  align-items: center;
  border-left: 1px solid #eee;
  color: #aaa;
  font-size: 8px;
  line-height: 16px;
}
.g-scroll b {
  font-weight: 400;
}
.newstyle {
  width: 46px;
  margin-left: 9px;
  margin-right: 11px;
}
.newstyle svg {
  width: 24px;
  height: 24px;
}
.helper {
  width: 50px;
  margin-left: 9px;
}
.helper svg {
  width: 19px;
  height: 27px;
}
.wrench {
  width: 58px;
  margin-left: 9px;
  margin-right: 11px;
}
.wrench svg {
  width: 24px;
  height: 26px;
}
.finder {
  width: 58px;
  margin-left: 8px;
}
.finder svg {
  width: 25px;
  height: 25px;
}
.picker {
  width: 36px;
  margin-left: 11px;
}
.picker svg {
  width: 18px;
  height: 25px;
}

/* document */
.desk {
  flex: 1;
  min-height: 0;
  display: flex;
  background: #e8e8e8;
  overflow: hidden;
}
.pane {
  flex: 1;
  padding-left: 324px;
  overflow: hidden;
}
.page {
  width: 1191px;
  height: 900px;
  padding: 7px 0 0 181px;
  box-sizing: border-box;
  background: #fff;
  box-shadow: 0 0 6px rgba(0, 0, 0, 0.18);
  color: #1a1a1a;
  font-family: "Liberation Serif", "Noto Sans CJK SC", serif;
  font-size: 36px;
  position: relative;
}
.line {
  height: 62.4px;
  line-height: 62.4px;
  white-space: nowrap;
}
.tight {
  letter-spacing: -0.6px;
}
.note {
  position: absolute;
  left: 87px;
  display: flex;
  align-items: center;
  height: 62px;
}
.note svg {
  width: 14px;
  height: 16px;
}
.mark {
  display: flex;
  align-items: flex-start;
  font-size: 28px;
  color: #e00000;
}
.mark .txt {
  width: 408px;
  height: 48px;
  line-height: 62px;
  background: #ffff00;
  padding-left: 1px;
  margin-left: -1px;
  box-sizing: border-box;
}
.heading {
  font-size: 44px;
  color: #2c7cb8;
  line-height: 66px;
}
.vscroll {
  width: 16px;
  flex-shrink: 0;
  background: #f0f0f0;
  display: flex;
  flex-direction: column;
  align-items: center;
  color: #888;
  font-size: 9px;
}
.sb-top {
  display: flex;
  flex-direction: column;
  gap: 4px;
  line-height: 12px;
  margin-top: 1px;
}
.sb-top b,
.sb-bottom b {
  font-weight: 400;
}
.sb-thumb {
  width: 14px;
  height: 44px;
  margin-top: 6px;
  border-radius: 7px;
  background: #fff;
  border: 1px solid #d8d8d8;
  box-sizing: border-box;
}
.sb-bottom {
  margin-top: auto;
  margin-bottom: 2px;
  display: flex;
  flex-direction: column;
  line-height: 17px;
  align-items: center;
}

/* status */
.status {
  height: 28px;
  flex-shrink: 0;
  display: flex;
  align-items: center;
  background: #f3f3f3;
  font-size: 12px;
  color: #555;
  white-space: nowrap;
}
.st-group {
  height: 28px;
  display: flex;
  align-items: center;
  justify-content: center;
  gap: 12px;
  box-sizing: border-box;
  border-right: 1px solid #e2e2e2;
  flex-shrink: 0;
}
.icon-group {
  gap: 3px;
}
.icon-group svg {
  width: 15px;
  height: 15px;
}
.st-check {
  width: 89px;
}
.st-proof {
  width: 87px;
}
.st-compat {
  width: 63px;
}
.st-shield {
  width: 92px;
  border-right: none;
}
.st-right {
  margin-left: auto;
  display: flex;
  align-items: center;
  height: 28px;
  padding-right: 15px;
}
.views {
  display: flex;
  align-items: center;
  gap: 10.500px;
}
.views svg {
  width: 15px;
  height: 15px;
}
.view-on {
  width: 23px;
  height: 24px;
  margin: 0 -4px;
  background: #c8c8c8;
  border-radius: 3px;
  display: flex;
  align-items: center;
  justify-content: center;
}
.st-sep {
  width: 1px;
  height: 24px;
  background: #e2e2e2;
  margin: 0 12px 0 13px;
}
.zoom-val {
  color: #888;
}
.z-drop {
  margin-left: 5px;
}
.z-minus,
.z-plus {
  width: 12px;
  height: 2px;
  background: #555;
  position: relative;
  margin-left: 12px;
}
.z-plus {
  margin-left: 10px;
}
.z-plus::after {
  content: "";
  position: absolute;
  left: 5px;
  top: -5px;
  width: 2px;
  height: 12px;
  background: #555;
}
.slider {
  width: 139px;
  height: 1px;
  background: #aaa;
  margin-left: 11px;
  position: relative;
}
.slider i {
  position: absolute;
  left: 71px;
  top: -6px;
  width: 13px;
  height: 13px;
  border-radius: 50%;
  border: 1px solid #666;
  background: #f3f3f3;
  box-sizing: border-box;
}
.z-fit {
  width: 14px;
  height: 14px;
  margin-left: 13px;
  stroke: #777;
}

/* taskbar */
.taskbar {
  height: 40px;
  flex-shrink: 0;
  display: flex;
  align-items: center;
  background: #25313a;
  color: #fff;
}
.apps {
  display: flex;
  margin-left: 17px;
  gap: 1px;
}
.app {
  width: 48px;
  height: 40px;
  display: flex;
  align-items: center;
  justify-content: center;
  position: relative;
  box-sizing: border-box;
}
.app.running::after {
  content: "";
  position: absolute;
  left: 3px;
  right: 3px;
  bottom: 0;
  height: 2px;
  background: #72b4de;
}
.app.active {
  background: #4a5a65;
}
.app.active::after {
  left: 0;
  right: 0;
}
.ico-e {
  font: 700 36px/32px "Liberation Sans", sans-serif;
  color: #0d7bd0;
  margin-top: -4px;
}
.ico-pr {
  width: 21px;
  height: 29px;
  background: #2a0a3a;
  border: 1.500px solid #a06bd0;
  color: #b98ae0;
  text-align: center;
  font: 12px/26px "Liberation Sans", sans-serif;
  box-sizing: border-box;
}
.ico-g {
  width: 24px;
  height: 30px;
  background: #1c1c1c;
  border-radius: 4px;
  color: #f0c81c;
  text-align: center;
  font: 700 20px/30px "Liberation Sans", sans-serif;
}
.ico-w {
  width: 22px;
  height: 30px;
  background: #3f8ff0;
  border-radius: 3px;
  display: flex;
  align-items: center;
  justify-content: center;
}
.ico-k {
  width: 24px;
  height: 34px;
  background: #2d8cf0;
  border-radius: 5px;
  display: flex;
  align-items: center;
  justify-content: center;
}
.ico-k i,
.t-k i {
  width: 17px;
  height: 17px;
  border: 1.500px solid #fff;
  border-radius: 50%;
  box-sizing: border-box;
  color: #fff;
  font: 700 11px/14px "Liberation Sans", sans-serif;
  text-align: center;
}
.tray {
  margin-left: auto;
  display: flex;
  align-items: center;
  height: 40px;
}
.ime {
  width: 15px;
  height: 15px;
  background: #fff;
  color: #111;
  font-size: 12px;
  line-height: 15px;
  text-align: center;
  outline: 1px solid #111;
  margin-right: 33px;
  margin-bottom: 4px;
}
.t-ico {
  width: 16px;
  height: 16px;
  stroke: none;
  margin-right: 8px;
}
.t-k {
  width: 16px;
  height: 16px;
  background: #2d8cf0;
  border-radius: 3px;
  display: flex;
  align-items: center;
  justify-content: center;
  margin-right: 8px;
}
.t-k i {
  width: 12px;
  height: 12px;
  font-size: 8px;
  line-height: 10px;
  border-width: 1px;
}
.vol {
  width: 16px;
  margin-right: 8px;
}
.net {
  width: 18px;
  margin-right: 14px;
}
.clock {
  width: 54px;
  display: flex;
  flex-direction: column;
  align-items: center;
  font: 12.500px/19px "Noto Sans", sans-serif;
  color: #eee;
  white-space: nowrap;
}
.show-desktop {
  width: 1px;
  height: 40px;
  background: #5a6770;
  margin-left: 8px;
  margin-right: 4px;
}

/* live panel */
.live {
  position: absolute;
  left: 1479px;
  top: 18px;
  width: 395px;
  height: 613px;
  background: rgba(64, 64, 64, 0.8);
  display: flex;
  flex-direction: column;
  color: #fff;
}
.live-head {
  height: 66px;
  flex-shrink: 0;
  padding: 0 17px;
  background: rgba(255, 255, 255, 0.035);
  position: relative;
  z-index: 1;
}
.live-tools {
  position: absolute;
  right: 13px;
  top: 11px;
  display: flex;
  gap: 16px;
  align-items: center;
}
.live-tools svg {
  width: 17px;
  height: 17px;
  stroke: #c8c8c8;
}
.live-tools .up {
  stroke: #38a5dc;
}
.live-tools .close {
  stroke: #e0e0e0;
  width: 15px;
  height: 15px;
}
.live-stats {
  position: absolute;
  left: 17px;
  top: 37px;
  display: flex;
  align-items: center;
  font: 13px/20px "Noto Sans", "Noto Sans CJK SC", sans-serif;
  white-space: nowrap;
  color: #f0f0f0;
}
.s-pop {
  width: 84px;
}
.s-up {
  width: 101px;
}
.s-q {
  width: 65px;
  margin-right: 0;
}
.dot {
  width: 13px;
  height: 13px;
  border-radius: 50%;
  background: #5fdc8c;
  box-shadow: 0 0 0 2px #666, 0 0 0 3px #999;
  margin: 0 6px 0 1px;
}
.chat {
  height: 413px;
  flex-shrink: 0;
  overflow: hidden;
  display: flex;
  flex-direction: column;
  justify-content: flex-end;
  padding: 0 17px 2px;
  box-sizing: border-box;
}
.chat-row {
  height: 43px;
  line-height: 43px;
  flex-shrink: 0;
  font: 17px/43px "Noto Sans CJK SC", sans-serif;
  white-space: nowrap;
}
.c-user {
  color: #a5adc2;
  margin-right: 4px;
}
.c-msg {
  color: #fff;
}
.handle {
  height: 13px;
  flex-shrink: 0;
  border-top: 1px solid #3a3a3a;
  border-bottom: 1px solid #3a3a3a;
  box-sizing: border-box;
  display: flex;
  align-items: center;
  justify-content: center;
}
.handle i {
  width: 24px;
  height: 5px;
  border-top: 1px solid #888;
  border-bottom: 1px solid #888;
}
.gifts {
  padding: 0 17px;
  margin-top: -1px;
  display: flex;
  flex-direction: column;
  gap: 20px;
}
.g-user {
  font-size: 17px;
  line-height: 26px;
  color: #fff;
}
.g-line {
  height: 32px;
  display: flex;
  align-items: center;
  color: #a5adc2;
  font-size: 15px;
  white-space: nowrap;
}
.g-time {
  width: 108px;
  font-family: "Noto Sans", "Noto Sans CJK SC", sans-serif;
}
.fries {
  width: 30px;
  height: 32px;
  stroke: none;
  margin-right: 6px;
}
.g-item {
  font-family: "Noto Sans", "Noto Sans CJK SC", sans-serif;
}
.g-price {
  margin-left: auto;
  display: flex;
  align-items: center;
  font: 18px/20px "Noto Sans", sans-serif;
  color: #a9c4e8;
  padding-right: 1px;
}
.eq {
  font-size: 22px;
  margin-right: 3px;
}
.gem {
  width: 15px;
  height: 17px;
  border-radius: 45% 55% 55% 45%;
  background: radial-gradient(circle at 70% 60%, #dfeefb 30%, #6fb5ea 75%);
  margin-bottom: 6px;
}

/* gauge */
.gauge {
  position: absolute;
  left: 1752px;
  top: 853px;
  width: 120px;
  height: 60px;
  display: flex;
  align-items: center;
}
.g-ring {
  position: absolute;
  left: 0;
  top: 0;
  width: 60px;
  height: 60px;
  border-radius: 50%;
  background: #4a4d59;
  box-shadow: 0 0 3px rgba(0, 0, 0, 0.4);
  display: flex;
  align-items: center;
  justify-content: center;
}
.g-ring svg {
  position: absolute;
  inset: 0;
  width: 60px;
  height: 60px;
}
.g-num {
  color: #f2f2f2;
  font: 300 24px/28px "Noto Sans", sans-serif;
}
.g-num small {
  font-size: 10px;
  margin-left: 1px;
}
.g-pill {
  margin-left: 40px;
  width: 79px;
  height: 41px;
  box-sizing: border-box;
  padding: 0 9px 0 20px;
  border-radius: 0 21px 21px 0;
  background: #2f323b;
  display: flex;
  flex-direction: column;
  justify-content: space-around;
}
.g-rate {
  display: flex;
  align-items: center;
  justify-content: space-between;
  font: 11px/14px "Noto Sans", sans-serif;
  color: #8f929c;
}
.g-rate em {
  font-style: normal;
  font-weight: 700;
  color: #eee;
}
.arr {
  width: 8px;
  height: 8px;
}
</style>

<style>
html,
body {
  margin: 0;
  background: #000;
}
</style>
